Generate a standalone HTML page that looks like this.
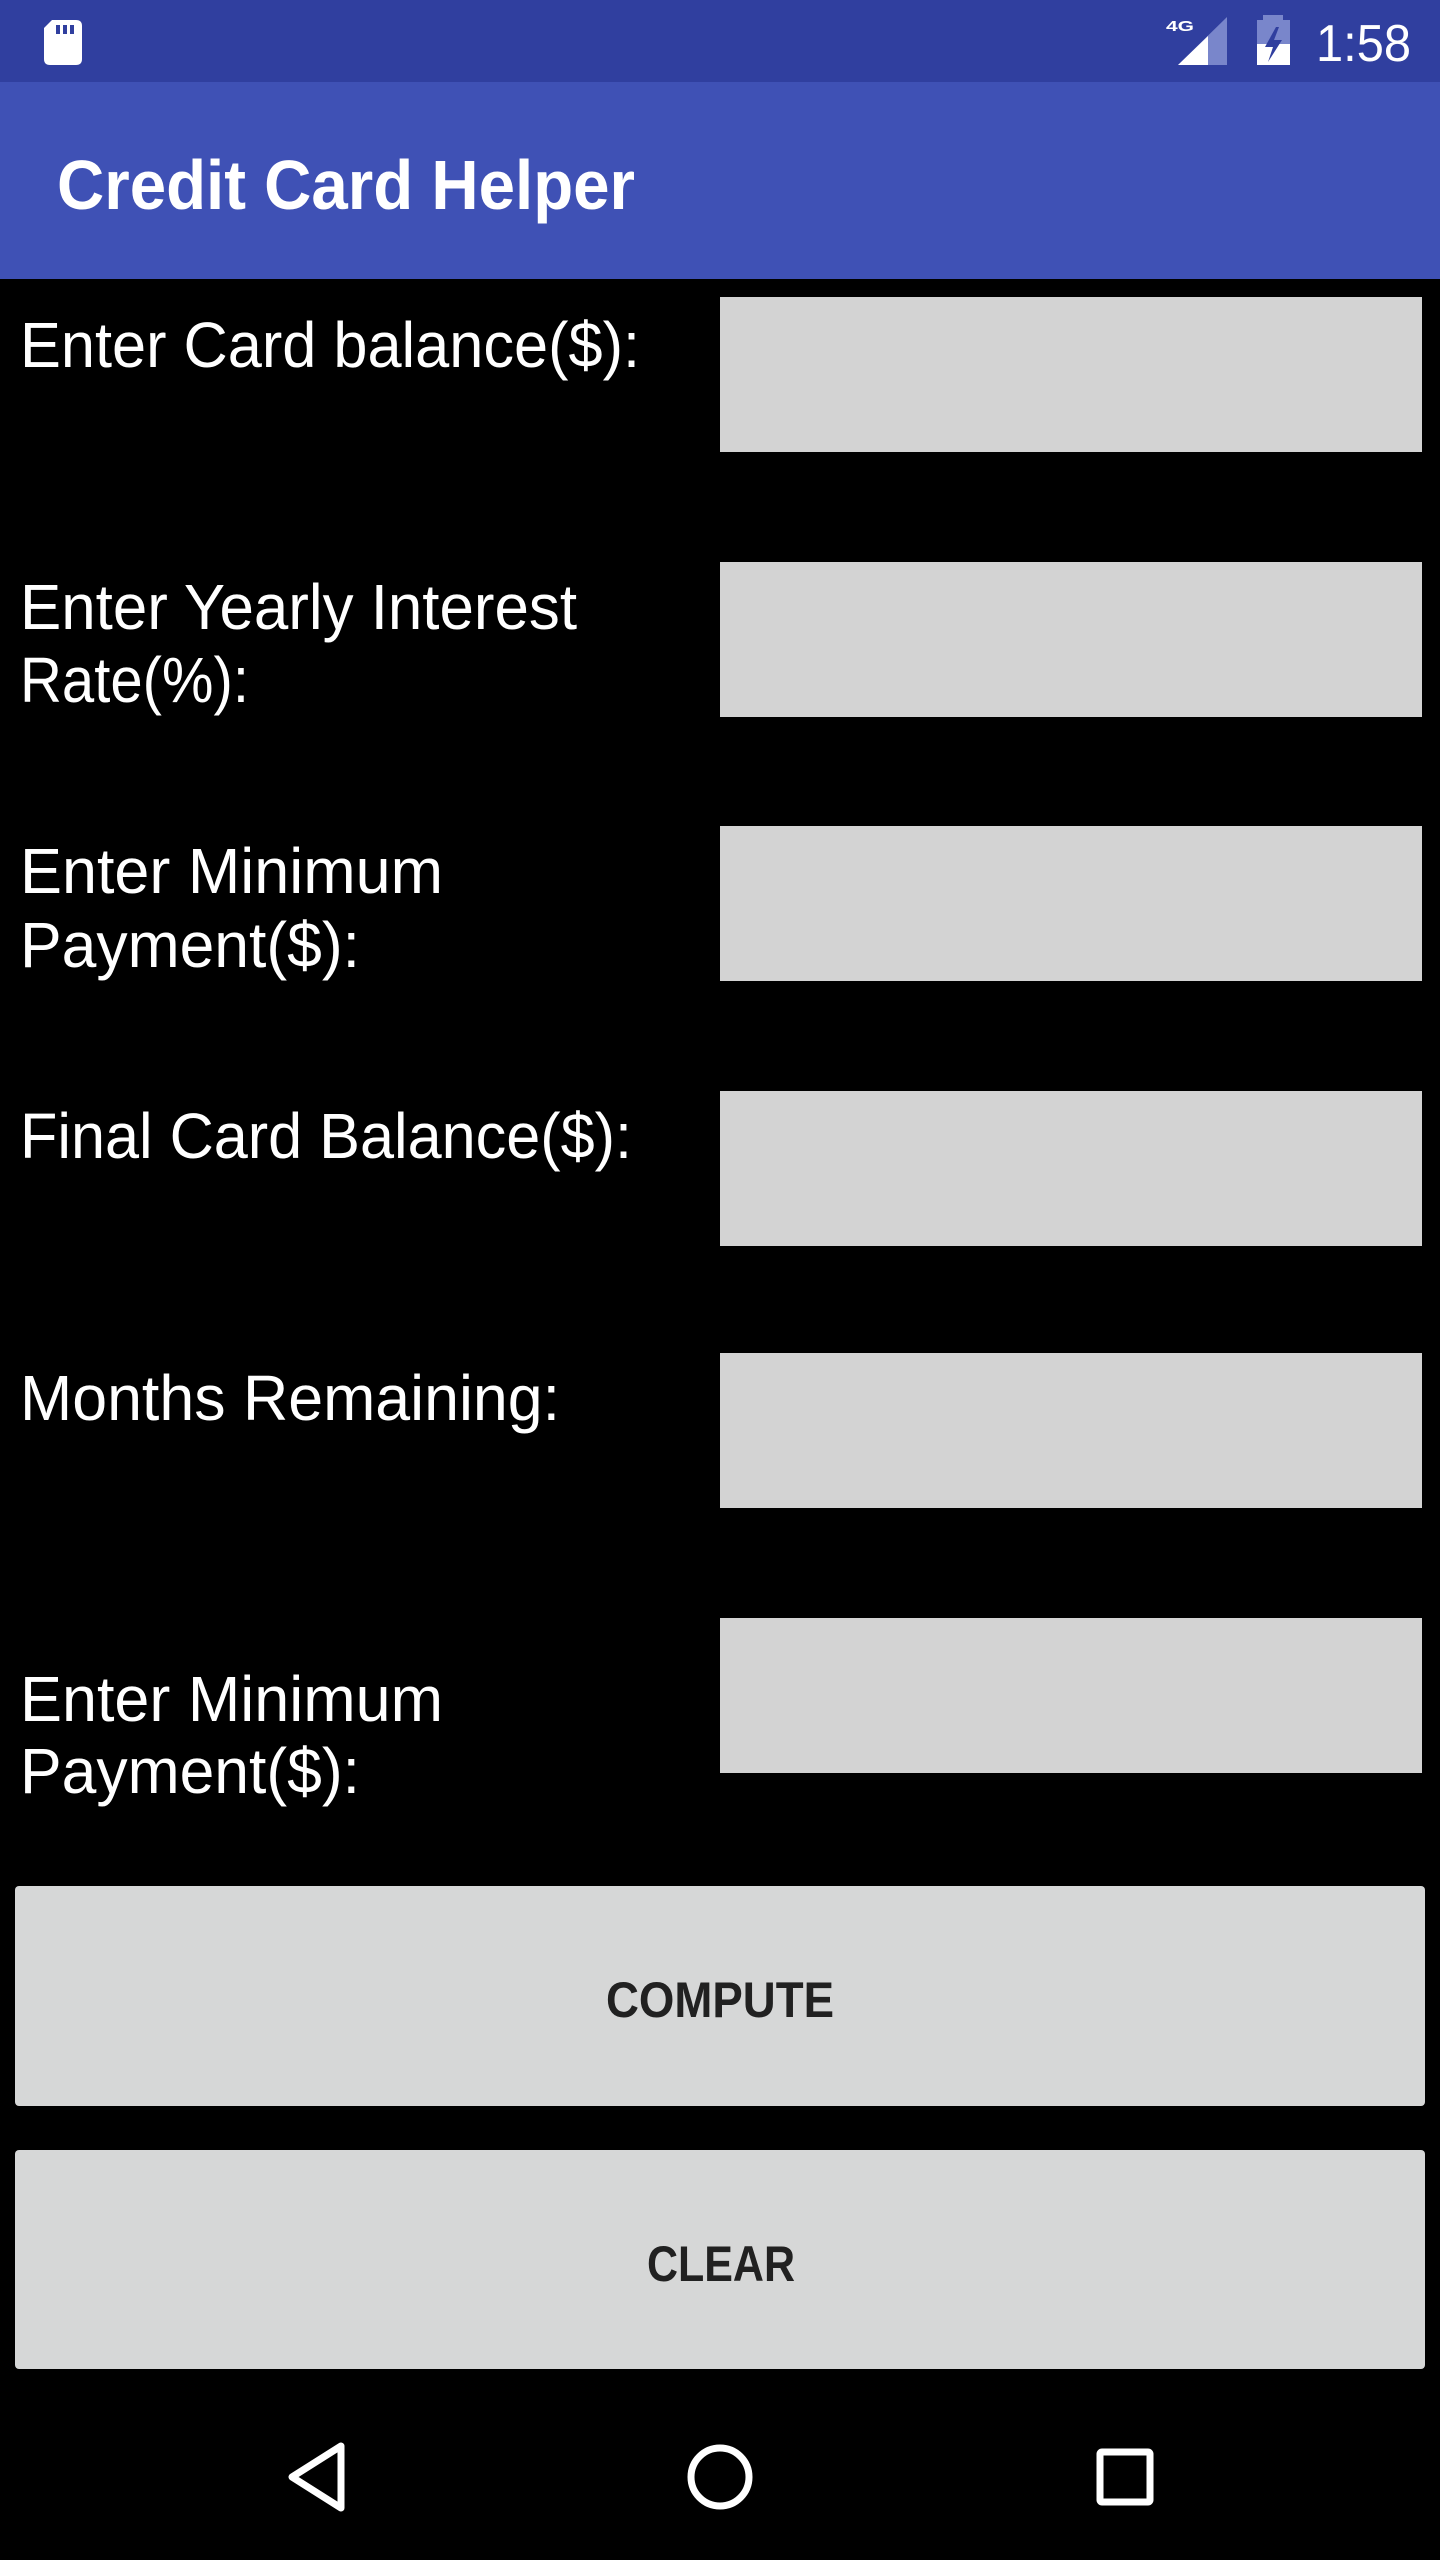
<!DOCTYPE html>
<html><head><meta charset="utf-8"><style>
html,body{margin:0;padding:0;background:#000;width:1440px;height:2560px;overflow:hidden}
svg{display:block}
text{font-family:"Liberation Sans",sans-serif}
</style></head><body>
<svg width="1440" height="2560" viewBox="0 0 1440 2560" xmlns="http://www.w3.org/2000/svg">
<rect x="0" y="0" width="1440" height="2560" fill="#000"/>
<rect x="0" y="0" width="1440" height="82" fill="#303f9f"/>
<rect x="0" y="82" width="1440" height="197" fill="#3f51b5"/>
<!-- sd card -->
<path d="M52 20 H76 Q82 20 82 26 V59 Q82 65 76 65 H50 Q44 65 44 59 V28 Z" fill="#fff"/>
<rect x="56" y="25" width="4" height="9" fill="#303f9f"/>
<rect x="63" y="25" width="4" height="9" fill="#303f9f"/>
<rect x="70" y="25" width="4" height="9" fill="#303f9f"/>
<!-- 4G signal -->
<text x="1166" y="31" font-size="15" font-weight="bold" fill="#fff" textLength="28" lengthAdjust="spacingAndGlyphs">4G</text>
<polygon points="1178,65 1227,17 1227,65" fill="#7986cb"/>
<polygon points="1178,65 1208,36 1208,65" fill="#fff"/>
<!-- battery -->
<rect x="1263" y="15" width="20" height="6" fill="#7986cb"/>
<rect x="1257" y="20" width="33" height="24" fill="#7986cb"/>
<rect x="1257" y="44" width="33" height="21" fill="#fff"/>
<polygon points="1276,27 1265,47 1273,47 1268,62 1282,40 1274,40 1279,27" fill="#303f9f"/>
<text x="1316" y="61" font-size="52" fill="#fff" textLength="95" lengthAdjust="spacingAndGlyphs">1:58</text>
<!-- title -->
<text x="57" y="209" font-size="70" font-weight="bold" fill="#fff" textLength="578" lengthAdjust="spacingAndGlyphs">Credit Card Helper</text>
<!-- boxes -->
<g fill="#d3d3d3">
<rect x="720" y="297" width="702" height="155"/>
<rect x="720" y="562" width="702" height="155"/>
<rect x="720" y="826" width="702" height="155"/>
<rect x="720" y="1091" width="702" height="155"/>
<rect x="720" y="1353" width="702" height="155"/>
<rect x="720" y="1618" width="702" height="155"/>
</g>
<g fill="#fff" font-size="64">
<text x="20" y="367" textLength="620" lengthAdjust="spacingAndGlyphs">Enter Card balance($):</text>
<text x="20" y="629" textLength="557" lengthAdjust="spacingAndGlyphs">Enter Yearly Interest</text>
<text x="20" y="702" textLength="229" lengthAdjust="spacingAndGlyphs">Rate(%):</text>
<text x="20" y="893" textLength="423" lengthAdjust="spacingAndGlyphs">Enter Minimum</text>
<text x="20" y="967" textLength="340" lengthAdjust="spacingAndGlyphs">Payment($):</text>
<text x="20" y="1158" textLength="612" lengthAdjust="spacingAndGlyphs">Final Card Balance($):</text>
<text x="20" y="1420" textLength="540" lengthAdjust="spacingAndGlyphs">Months Remaining:</text>
<text x="20" y="1721" textLength="423" lengthAdjust="spacingAndGlyphs">Enter Minimum</text>
<text x="20" y="1793" textLength="340" lengthAdjust="spacingAndGlyphs">Payment($):</text>
</g>
<!-- buttons -->
<rect x="15" y="1886" width="1410" height="220" rx="4" fill="#d6d7d7"/>
<rect x="15" y="2150" width="1410" height="219" rx="4" fill="#d6d7d7"/>
<text x="606" y="2017" font-size="50" font-weight="bold" fill="#212121" textLength="228" lengthAdjust="spacingAndGlyphs">COMPUTE</text>
<text x="647" y="2281" font-size="50" font-weight="bold" fill="#212121" textLength="148" lengthAdjust="spacingAndGlyphs">CLEAR</text>
<!-- nav -->
<polygon points="292,2477 341,2446 341,2508" fill="none" stroke="#fff" stroke-width="7" stroke-linejoin="round"/>
<circle cx="720" cy="2477" r="29" fill="none" stroke="#fff" stroke-width="7"/>
<rect x="1100" y="2452" width="50" height="50" rx="2" fill="none" stroke="#fff" stroke-width="7"/>
</svg>
</body></html>
